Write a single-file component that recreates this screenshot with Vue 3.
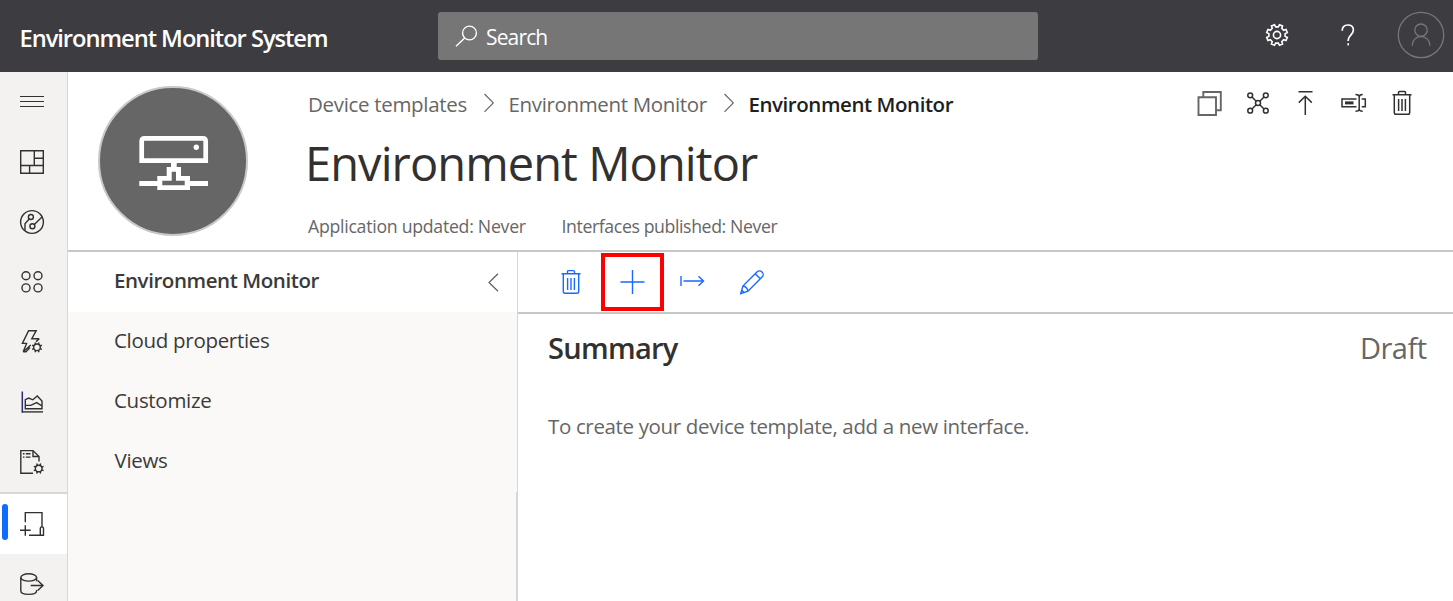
<script setup>
const railItems = [
  'menu', 'dashboard', 'devices', 'groups', 'rules', 'analytics', 'jobs', 'templates', 'export',
]
const sideItems = [
  { label: 'Environment Monitor', cls: 'current' },
  { label: 'Cloud properties', cls: 'cloud' },
  { label: 'Customize', cls: 'customize' },
  { label: 'Views', cls: 'views' },
]
// Toothed gear outline around a centre point.
function gear(cx, cy, outer, inner, teeth = 8) {
  const step = (Math.PI * 2) / teeth
  const pts = []
  for (let i = 0; i < teeth; i++) {
    const a = (i + 0.5) * step
    for (const [r, o] of [[inner, -0.29], [outer, -0.2], [outer, 0.2], [inner, 0.29]]) {
      pts.push(`${(cx + r * Math.cos(a + o * step)).toFixed(2)} ${(cy + r * Math.sin(a + o * step)).toFixed(2)}`)
    }
  }
  return 'M' + pts.join('L') + 'Z'
}
// Eight short spokes around a small ring.
function spokes(cx, cy, from, to) {
  let d = ''
  for (let i = 0; i < 8; i++) {
    const a = ((i + 0.5) * Math.PI) / 4
    d += `M${(cx + from * Math.cos(a)).toFixed(2)} ${(cy + from * Math.sin(a)).toFixed(2)}L${(cx + to * Math.cos(a)).toFixed(2)} ${(cy + to * Math.sin(a)).toFixed(2)}`
  }
  return d
}
const settingsGear = gear(15, 15, 10.6, 8.2)
const rulesGear = spokes(37, 35.3, 3.4, 5.3)
const jobsGear = spokes(38.7, 36.5, 3.4, 5.3)
</script>

<template>
  <div class="app">
    <header class="topbar">
      <div class="brand">Environment Monitor System</div>
      <div class="search">
        <svg class="search-icon" width="24" height="24" viewBox="0 0 24 24">
          <circle cx="14.500" cy="9" r="6.900" /><path d="M9.700 13.900L1 22.300" />
        </svg>
        <span>Search</span>
      </div>
      <div class="account">
        <svg class="cog" width="30" height="30" viewBox="0 0 30 30">
          <path :d="settingsGear" /><circle cx="15" cy="15" r="3.600" />
        </svg>
        <svg class="help" width="14" height="22" viewBox="0 0 14 22">
          <path d="M1.200 6.800C1.200 3 3.600 1 6.800 1c3.300 0 5.600 1.800 5.600 5.100 0 4.700-5.200 5.300-5.200 9.900v1" />
          <path d="M7.200 19.200v2.200" />
        </svg>
        <svg class="avatar" width="48" height="48" viewBox="0 0 48 48">
          <circle cx="24" cy="24" r="22.700" />
          <circle cx="24" cy="19.200" r="6.200" />
          <path d="M15.200 34.700C15.200 29.500 19 25.500 24 25.500s9 4 9 9.200" />
        </svg>
      </div>
    </header>

    <div class="body">
      <nav class="rail">
        <div v-for="name in railItems" :key="name" class="rail-item" :class="{ active: name === 'templates' }">
          <svg width="67" height="60" viewBox="0 0 67 60">
            <path v-if="name === 'menu'" class="thin" d="M20 24.500H44M20 29.500H44M20 34.500H44" />
            <path v-else-if="name === 'dashboard'" d="M20.700 18.700H43.300V41.300H20.700ZM34.300 18.700V33.500M20.700 33.500H43.300M34.300 26.200H43.300M29.600 33.500V41.300" />
            <g v-else-if="name === 'devices'">
              <circle cx="32" cy="30" r="11.400" /><circle cx="30.900" cy="25" r="2.500" /><circle cx="32.400" cy="34.300" r="2.500" />
              <path d="M34.300 32.400L42 25.100M29.200 27L25 31.800V38.600" />
            </g>
            <g v-else-if="name === 'groups'">
              <circle cx="26" cy="23.800" r="4" /><circle cx="38" cy="23.800" r="4" /><circle cx="26" cy="35.900" r="4" /><circle cx="38" cy="35.900" r="4" />
            </g>
            <g v-else-if="name === 'rules'">
              <path d="M39.300 26.700H31.800L36.200 18.700H28.600L22.400 31.400H26.600L23.200 39.700L30.800 33M39.300 26.700L36 29.600M23.200 39.700H26L30 35.500" />
              <circle cx="37" cy="35.300" r="3.300" /><path :d="rulesGear" />
            </g>
            <g v-else-if="name === 'analytics'">
              <path class="axis" d="M22.300 19.500V40.500" /><path d="M21.700 39.900H43" />
              <path d="M25.300 36.700V27.700L28.700 26L32.800 27.800L37.300 24L42 29V36.700ZM25.300 33.400H30.700L36.700 30.600L42 34" />
            </g>
            <g v-else-if="name === 'jobs'">
              <path d="M33 41.300H20.800V18.600H33L39 24.500V29.500M33 18.600V24.500H39" />
              <path d="M22.900 21.800H24.500M25.800 21.800H30.500M22.900 25.100H24.500M25.800 25.100H30.500" />
              <circle cx="38.700" cy="36.500" r="3.300" /><path :d="jobsGear" />
            </g>
            <g v-else-if="name === 'templates'">
              <path d="M25.300 28.300V18.600H42V33M29 41.300H41" />
              <path d="M40.300 40.500V34.300Q40.300 32.900 41.900 32.900T43.500 34.300V41.200H41Q40.300 41.200 40.300 40.500" />
              <path d="M20 36.300H30.700M25.300 31.300V41.800" />
            </g>
            <g v-else>
              <ellipse cx="28.700" cy="23.400" rx="7.900" ry="3.700" />
              <path d="M20.800 23.400V36.800C20.800 39 24.300 40.400 28.700 40.400S36.600 39 36.600 36.800V36M36.600 23.400V27.300M30.700 31.500H43M37.700 26.600L43 31.500L37.700 36.500" />
            </g>
          </svg>
        </div>
      </nav>

      <div class="page">
        <section class="hero">
          <svg class="device" width="150" height="150" viewBox="0 0 150 150">
            <circle cx="75" cy="75" r="74" />
            <path class="outline" d="M43.700 74.600V55.300Q43.700 52.300 46.700 52.300H104.700Q107.700 52.300 107.700 55.300V74.600Z" />
            <circle class="led" cx="98.300" cy="61.300" r="2.700" />
            <path class="solid" fill-rule="evenodd" d="M73 76H78.700V81H83V90H92V95H110V100H92V104H59.300V100H41.300V95H59.300V90H68.700V81H73ZM73.700 85.700V94.700H64.300V99.300H86.700V94.700H78V85.700Z" />
          </svg>
          <div class="info">
            <div class="crumbs">
              <span class="crumb first">Device templates</span>
              <svg width="10" height="20" viewBox="0 0 10 20"><path d="M.5 1L9.300 9.900L.5 18.800" /></svg>
              <span class="crumb second">Environment Monitor</span>
              <svg width="10" height="20" viewBox="0 0 10 20"><path d="M.5 1L9.300 9.900L.5 18.800" /></svg>
              <span class="crumb here">Environment Monitor</span>
            </div>
            <h1>Environment Monitor</h1>
            <div class="meta">
              <span class="updated">Application updated: Never</span>
              <span class="published">Interfaces published: Never</span>
            </div>
          </div>
          <div class="actions">
            <svg class="copy" width="28" height="28" viewBox="0 0 28 28"><path d="M2.500 8.300H20V26H2.500ZM7.300 8V3H24.800V21.300H20.500" /></svg>
            <svg width="28" height="28" viewBox="0 0 28 28">
              <circle cx="14" cy="14" r="2.500" /><circle cx="6.200" cy="6.300" r="2.400" /><circle cx="21.800" cy="6.300" r="2.400" /><circle cx="6.200" cy="21.700" r="2.400" /><circle cx="21.800" cy="21.700" r="2.400" />
              <path d="M8 8L12.200 12.200M20 8L15.800 12.200M8 20L12.200 15.800M20 20L15.800 15.800" />
            </svg>
            <svg width="28" height="28" viewBox="0 0 28 28"><path d="M6.500 2.700H20.500M13.300 26V7.300M6.800 13.600L13.300 7.200L19.800 13.600" /></svg>
            <svg width="28" height="28" viewBox="0 0 28 28">
              <path d="M16.500 10H2V17.800H16.500M21.700 10H25.300V17.800H21.700M15.500 5.500Q19.200 5.500 19.200 8V20Q19.200 22.300 15.500 22.300M22.700 5.500Q19.200 5.500 19.200 8M19.200 20Q19.200 22.300 22.700 22.300" />
              <path class="bar" d="M5 13.900H13.500" />
            </svg>
            <svg width="28" height="28" viewBox="0 0 28 28"><path d="M4.500 5.800H23.500M10.500 5.500V3.500Q10.500 2.600 11.500 2.600H16.500Q17.500 2.600 17.500 3.500V5.500M6.300 6V23.500Q6.300 25.300 8 25.300H20Q21.700 25.300 21.700 23.500V6M10.600 10V22M14 10V22M17.400 10V22" /></svg>
          </div>
        </section>

        <div class="lower">
          <aside class="side">
            <div v-for="item in sideItems" :key="item.label" class="side-item" :class="item.cls">
              <span>{{ item.label }}</span>
              <svg v-if="item.cls === 'current'" width="11" height="19" viewBox="0 0 11 19"><path d="M10 .7L1 9.500L10 18.300" /></svg>
            </div>
            <div class="scroll-edge"></div>
          </aside>
          <main class="content">
            <div class="toolbar">
              <div class="tool"><svg width="28" height="28" viewBox="0 0 28 28"><path d="M4.500 5.800H23.500M10.500 5.500V3.500Q10.500 2.600 11.500 2.600H16.500Q17.500 2.600 17.500 3.500V5.500M6.300 6V23.500Q6.300 25.300 8 25.300H20Q21.700 25.300 21.700 23.500V6M10.600 10V22M14 10V22M17.400 10V22" /></svg></div>
              <div class="tool marked"><svg width="28" height="28" viewBox="0 0 28 28"><path d="M1.500 14H25.500M13.500 2V26" /></svg></div>
              <div class="tool"><svg width="28" height="28" viewBox="0 0 28 28"><path d="M1 8V18M3.500 13H23.500M18.500 8.200L23.500 13L18.500 17.800" /></svg></div>
              <div class="tool"><svg width="28" height="28" viewBox="0 0 28 28"><path d="M1.700 25.700L3.900 18L18.200 3.700C19.300 2.600 21.500 2.400 23 3.900S24.400 7.700 23.300 8.800L9 23.200ZM3.900 18Q8 18.500 9 23.200M16.200 5.700L21.300 10.800M2.800 22.300L5.100 24.600" /></svg></div>
            </div>
            <div class="summary">
              <h2>Summary</h2>
              <span class="state">Draft</span>
            </div>
            <p>To create your device template, add a new interface.</p>
          </main>
        </div>
      </div>
    </div>
  </div>
</template>

<style>
body { margin: 0; overflow: hidden; }
</style>

<style scoped>
* { box-sizing: border-box; }
.app {
  width: 1453px; height: 601px; overflow: hidden; display: flex; flex-direction: column;
  background: #fff; color: #323130; font: 20.5px/36px "Open Sans", "Noto Sans", sans-serif;
}
svg { display: block; flex: none; fill: none; stroke: #323130; stroke-width: 1.4; }
span { white-space: nowrap; }

.topbar { height: 72px; flex: none; display: flex; background: #3d3c41; color: #fff; }
.brand { width: 438px; padding: 20px 0 0 19.500px; font-size: 23.700px; font-weight: 600; letter-spacing: -1.040px; white-space: nowrap; }
.search {
  width: 600px; height: 48px; margin-top: 12px; padding-left: 17px; display: flex; align-items: center;
  background: #767677; border-radius: 3px; font-size: 21px; letter-spacing: -.850px;
}
.search span { padding: 1px 0 0 7px; }
.search-icon { stroke: #fff; }
.account { flex: 1; display: flex; }
.cog { margin: 19.500px 0 0 224px; stroke: #fff; stroke-width: 1.600; }
.help { margin: 24px 0 0 49px; stroke: #fff; stroke-width: 1.700; }
.avatar { margin: 11px 0 0 42px; stroke: #777; stroke-width: 1.300; }

.body { flex: 1; display: flex; min-height: 0; }
.rail { width: 68px; flex: none; background: #f3f2f1; border-right: 1px solid #d8d7d6; overflow: hidden; }
.rail-item { height: 60px; }
.rail-item .thin { stroke-width: 1; }
.rail-item .axis { stroke: #2a2a7c; stroke-width: 1.500; }
.rail-item.active { height: 62px; background: #fff; border-top: 2px solid #d8d7d6; position: relative; }
.rail-item.active::before {
  content: ""; position: absolute; left: 2px; top: 10px; width: 6px; height: 36px; border-radius: 3px; background: #0f6cff;
}

.page { flex: 1; min-width: 0; display: flex; flex-direction: column; }
.hero { height: 180px; flex: none; display: flex; border-bottom: 2px solid #c8c8c8; }
.device { margin: 14px 0 0 30px; stroke: none; }
.device > circle:first-child { fill: #666; stroke: #c8c8c8; stroke-width: 2; }
.device .outline { stroke: #fff; stroke-width: 4.700; }
.device .led, .device .solid { fill: #fff; }
.info { flex: 1; padding: 14px 0 0 60px; color: #666; }
.crumbs { display: flex; align-items: center; gap: 15px; height: 36px; }
.crumbs svg { stroke: #666; stroke-width: 1.200; margin-top: -2px; }
.first { width: 160.500px; letter-spacing: -.320px; }
.second { width: 200px; letter-spacing: -.350px; }
.here { font-weight: 600; letter-spacing: -.440px; color: #201f1e; }
h1 { margin: 11px 0 0 -3px; font-size: 47px; line-height: 60px; font-weight: 400; letter-spacing: -.920px; color: #323130; }
.meta { display: flex; margin-top: 19px; font-size: 17.700px; line-height: 28px; }
.updated { width: 253.500px; letter-spacing: -.270px; }
.published { letter-spacing: -.391px; }
.actions { display: flex; gap: 20px; padding: 17px 37px 0 0; }
.actions svg { stroke-width: 1.500; }
.actions .copy { stroke: #666; stroke-width: 1.900; }
.actions .bar { stroke-width: 3; }

.lower { flex: 1; display: flex; min-height: 0; }
.side { width: 450px; flex: none; display: flex; flex-direction: column; background: #faf9f8; border-right: 1px solid #d8d7d6; }
.side-item { height: 60px; flex: none; padding: 0 18px 4px 46px; display: flex; align-items: center; justify-content: space-between; color: #3b3a39; }
.side-item svg { margin-top: 4px; stroke: #605e5c; stroke-width: 1.200; }
.current { background: #fff; font-weight: 600; letter-spacing: -.422px; }
.cloud { letter-spacing: -.300px; }
.customize { letter-spacing: -.300px; }
.views { letter-spacing: -.300px; padding-left: 46.500px; }
.scroll-edge { flex: 1; border-right: 1px solid #d8d7d6; }

.content { flex: 1; min-width: 0; }
.toolbar { height: 62px; display: flex; padding-left: 22px; border-bottom: 2px solid #c8c8c8; }
.tool { width: 61px; height: 60px; display: flex; align-items: center; justify-content: center; }
.tool svg { stroke: #1a68ff; }
.tool:nth-child(1) { padding-left: 1px; }
.tool:nth-child(3) { width: 59px; }
.tool:nth-child(4) { width: 60px; }
.marked { width: 63px; height: 58px; margin-top: 1px; border: 4px solid #f00; }
.summary { display: flex; justify-content: space-between; align-items: center; height: 68px; padding: 0 26.500px 0 30px; }
h2 { margin: 0; font-size: 29px; font-weight: 600; letter-spacing: -.700px; }
.state { font-size: 29px; letter-spacing: -.500px; color: #666; }
p { margin: 26px 0 0 30px; letter-spacing: -.350px; color: #666; }
</style>
